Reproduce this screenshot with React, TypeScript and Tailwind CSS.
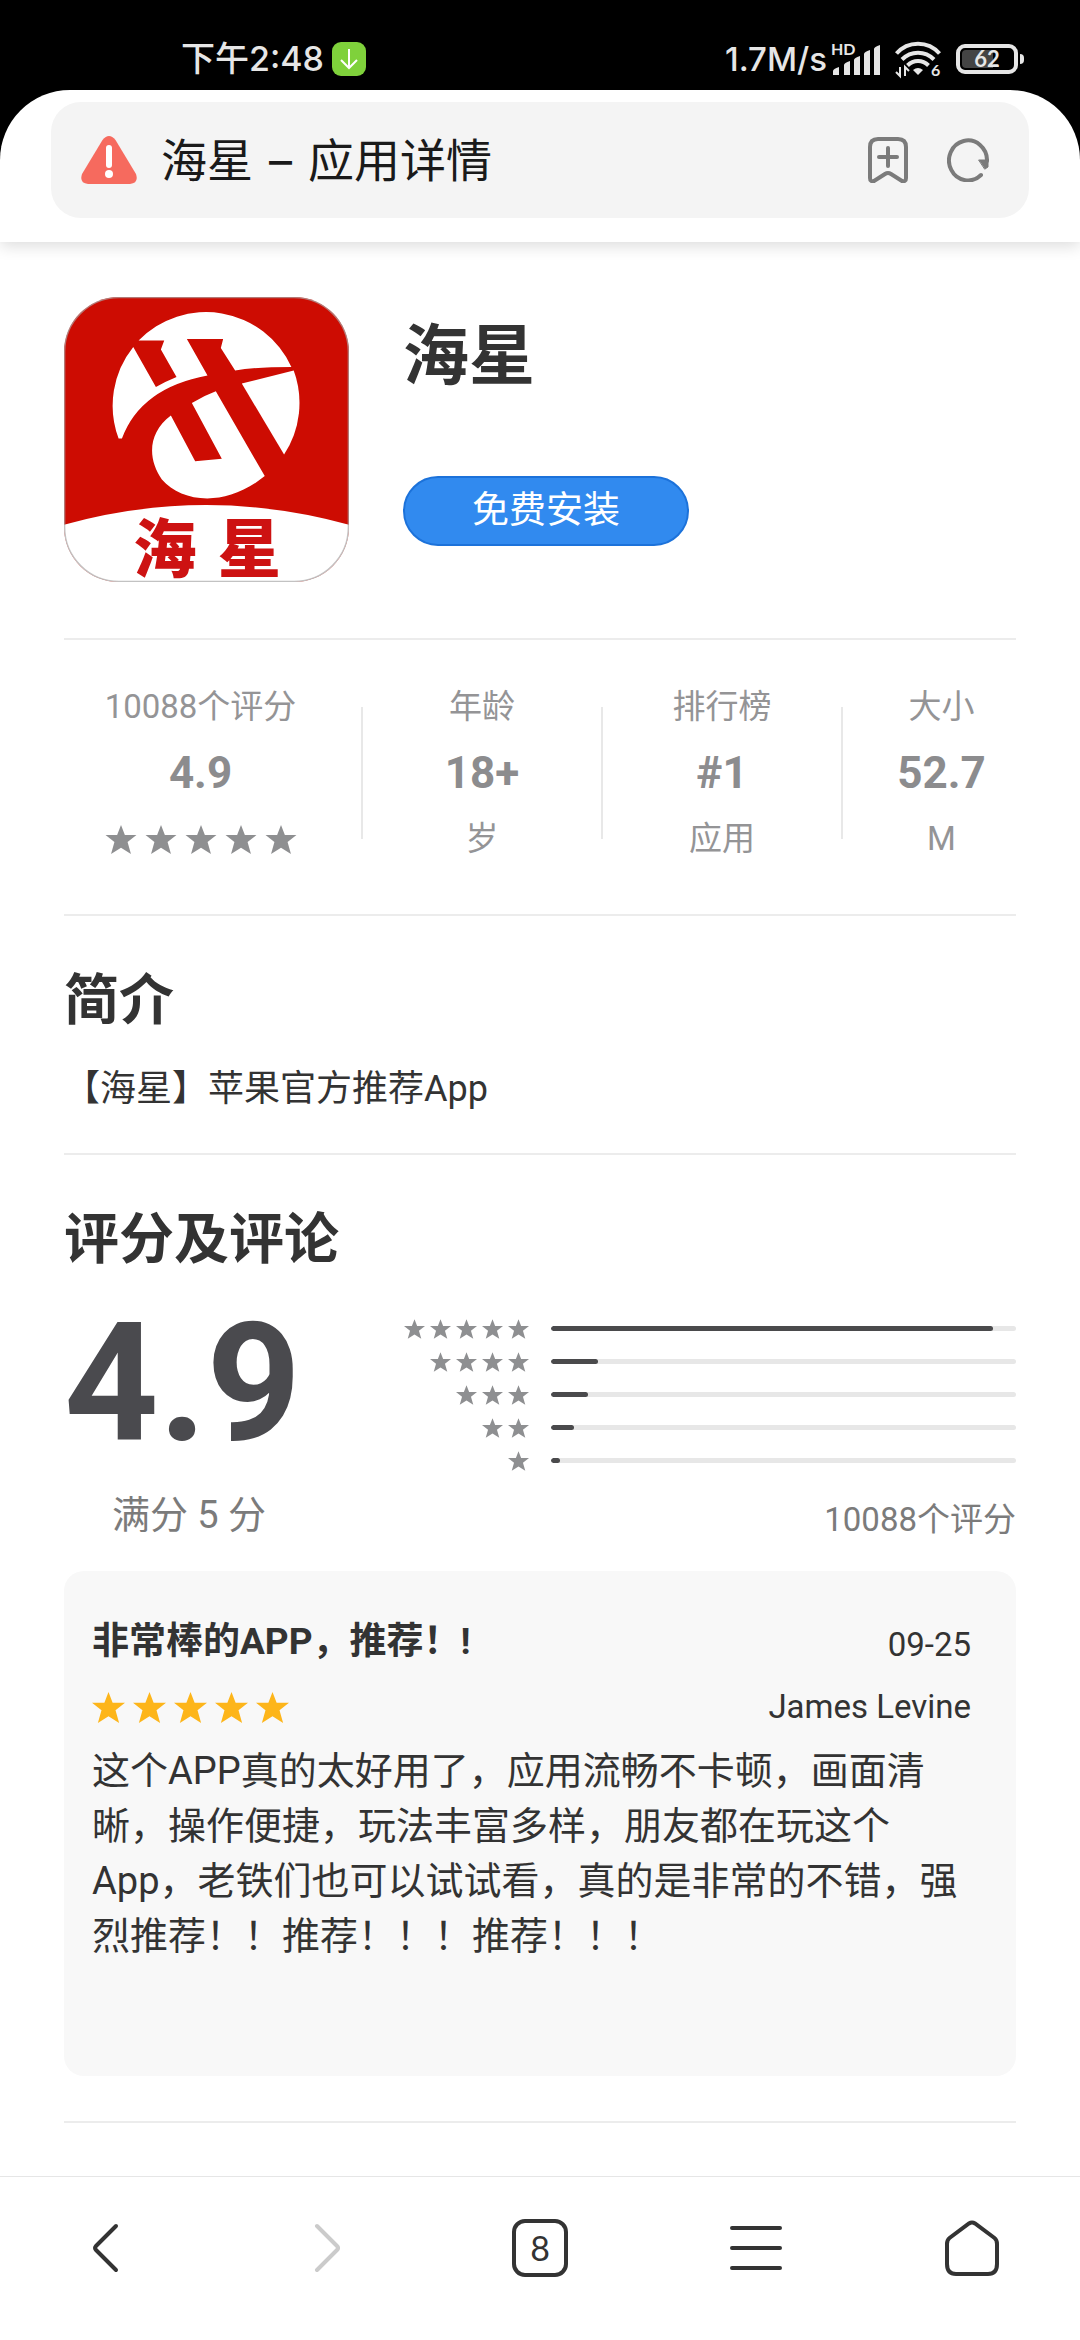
const stats = [
  { label: '年龄', value: '18+', note: '岁' },
  { label: '排行榜', value: '#1', note: '应用' },
]

const breakdown = [
  { stars: 5, percent: 95 },
  { stars: 4, percent: 10 },
  { stars: 3, percent: 8 },
  { stars: 2, percent: 5 },
  { stars: 1, percent: 2 },
]

function Star({ className }: { className: string }) {
  return (
    <svg viewBox="0 0 32 30" className={className} fill="currentColor" aria-hidden="true">
      <path d="M16 0l4 10.400H32l-9.200 7.300L26.300 30 16 23.500 5.700 30l3.500-12.300L0 10.400h12z" />
    </svg>
  )
}

function Stars({ count, className, size }: { count: number; className: string; size: string }) {
  return (
    <div className={`flex items-center ${className}`} role="img" aria-label={`${count} 星`}>
      {Array.from({ length: count }, (_, i) => (
        <Star key={i} className={size} />
      ))}
    </div>
  )
}

function StatusBar() {
  return (
    <div className="flex h-[90px] items-center justify-between pt-7 pr-[56px] pl-[181px] text-[#e6e6e6]">
      <div className="flex items-center gap-2">
        <span className="font-['Inter','Noto_Sans_CJK_SC',sans-serif] text-[34px] leading-10 font-medium">
          下午2:48
        </span>
        <svg viewBox="0 0 34 34" className="size-[34px]" fill="none">
          <rect width="34" height="34" rx="9" fill="#7fd13b" />
          <path d="M17 7v19M9 18l8 8 8-8" stroke="#fff" strokeWidth="2" />
        </svg>
      </div>

      <div className="flex items-center">
        <span className="font-['Inter',sans-serif] text-[33px] leading-10 font-medium">1.7M/s</span>
        <svg viewBox="0 0 50 34" className="ml-1 h-[34px] w-[50px] overflow-visible" fill="currentColor">
          <text x="0" y="13" fontSize="16" fontWeight="700" fontFamily="Lato, sans-serif">
            HD
          </text>
          <path d="M2 33v-4q0-2 6-4v8zM13 33V23q0-2 6-4v14zM23 33V18q0-2 6-4v19zM33 33V12q0-2 6-4v25zM43 33V7q0-2 6-4v30z" />
        </svg>
        <svg
          viewBox="0 0 46 36"
          className="ml-3.5 h-9 w-[46px] overflow-visible"
          fill="none"
          stroke="currentColor"
          strokeWidth="4"
        >
          <path d="M1.500 12.500C13-.5 33-.5 44.500 12.500M7 18.500c9-9 23-9 32 0M12.500 24.500c6-6 15-6 21 0" />
          <path d="M18 29q5-4 10 0l-5 5z" fill="currentColor" stroke="none" />
          <path d="M5 26v9l-4-4M10 35v-9l4 4" strokeWidth="2" />
          <text x="36" y="35" fontSize="16" fontWeight="700" fill="currentColor" stroke="none" fontFamily="Lato, sans-serif">
            6
          </text>
        </svg>
        <div className="ml-[15px] flex items-center gap-0.5">
          <div className="flex h-[30px] w-[62px] rounded-[9px] border-4 border-current p-0.5">
            <div className="flex w-full items-center justify-center rounded-sm bg-linear-to-r from-[#444] from-62% to-transparent to-62% font-['Lato',sans-serif] text-[22px] leading-5 font-bold">
              62
            </div>
          </div>
          <span className="h-2.5 w-1 rounded-r-sm bg-current" />
        </div>
      </div>
    </div>
  )
}

function AddressBar() {
  return (
    <header className="relative z-10 rounded-t-[70px] bg-white px-[51px] pt-3 pb-6 shadow-[0_4px_16px_rgba(0,0,0,0.14)]">
      <div className="flex h-[116px] items-center rounded-[30px] bg-[#f4f4f4] pr-10 pl-[30px]">
        <svg viewBox="0 0 56 48" className="h-12 w-14" fill="none">
          <path d="M21.500 4Q28-4 34.500 4L55 38q3 9-6 10H7q-9-1-6-10z" fill="#f66a5e" />
          <path d="M28 12v17" stroke="#fff" strokeWidth="6" strokeLinecap="round" />
          <circle cx="28" cy="38" r="4" fill="#fff" />
        </svg>
        <div className="ml-6 flex-1 font-['Inter','Noto_Sans_CJK_SC',sans-serif] text-[46px] leading-[60px] text-[#1a1a1a]">
          海星 <span className="mx-[3px]">–</span> 应用详情
        </div>
        <button type="button" aria-label="收藏" className="text-[#7b7b7b]">
          <svg
            viewBox="0 0 40 46"
            className="h-[46px] w-10"
            fill="none"
            stroke="currentColor"
            strokeWidth="4"
            strokeLinecap="round"
            strokeLinejoin="round"
          >
            <path d="M2 10q0-8 8-8h20q8 0 8 8v31q0 4-4 3l-11-7q-3-2-6 0L6 44q-4 1-4-3z" />
            <path d="M20 11v18M11 20h18" />
          </svg>
        </button>
        <button type="button" aria-label="刷新" className="ml-[39px] text-[#7b7b7b]">
          <svg
            viewBox="0 0 42 44"
            className="h-11 w-[42px]"
            fill="none"
            stroke="currentColor"
            strokeWidth="4"
            strokeLinecap="round"
          >
            <path d="M34 37a19 20 0 1 1 6-14" />
            <path d="M32 22h9v7l-3 2z" fill="currentColor" strokeWidth="1" />
          </svg>
        </button>
      </div>
    </header>
  )
}

function AppLogo() {
  return (
    <svg viewBox="0 0 856 856" className="size-[285px] shrink-0 overflow-visible" role="img" aria-label="海星">
      <clipPath id="logo-shape">
        <rect width="856" height="856" rx="165" />
      </clipPath>
      <g clipPath="url(#logo-shape)">
        <rect width="856" height="856" fill="#cd0c02" />
        <g fill="#fff" transform="translate(-74 -82)">
          <path d="M298 213A282 282 0 0 1 757 292Q650 292 588 303L545 235L552 208H443L505 318Q305 355 248 507H238A282 282 0 0 1 282 232L350 352Q380 335 412 322L365 240L375 213Z" />
          <path d="M764 303L608 342L735 555A282 282 0 0 0 764 303Z" />
          <path d="M395 438L468 575L548 568L458 400Q495 378 530 365L677 620C560 715 430 700 368 630C325 570 325 490 395 438Z" />
          <path d="M74 766Q500 648 930 766V938H74Z" />
        </g>
      </g>
      <rect x="2" y="2" width="852" height="852" rx="163" fill="none" stroke="#a8a8a8" strokeOpacity="0.7" strokeWidth="4" />
      <g fill="#cd1212" fontSize="190" fontWeight="900" textAnchor="middle" fontFamily="Noto Sans CJK SC, sans-serif">
        <text x="303" y="826">海</text>
        <text x="557" y="826">星</text>
      </g>
    </svg>
  )
}

function Divider() {
  return <span className="h-[132px] w-0.5 bg-[#e8e8e8]" />
}

function StatsRow() {
  return (
    <section className="flex items-center border-t-2 border-[#ececec] pt-[45px] pb-[53px] text-center text-[33px] leading-[44px] text-[#949496]">
      <div className="flex w-[297px] flex-col items-center gap-[18px] pr-6">
        <div>10088个评分</div>
        <div className="text-[44px] leading-[52px] font-bold text-[#8c8c8e]">4.9</div>
        <Stars count={5} className="h-11 gap-2 text-[#8e8f91]" size="h-[29px] w-8" />
      </div>
      {stats.map((s) => (
        <div key={s.label} className="flex w-60 items-center">
          <Divider />
          <div className="flex flex-1 flex-col gap-[18px]">
            <div>{s.label}</div>
            <div className="text-[44px] leading-[52px] font-bold text-[#8c8c8e]">{s.value}</div>
            <div>{s.note}</div>
          </div>
        </div>
      ))}
      <div className="flex flex-1 items-center">
        <Divider />
        <div className="flex flex-1 flex-col gap-[18px] pl-6">
          <div>大小</div>
          <div className="text-[44px] leading-[52px] font-bold text-[#8c8c8e]">52.7</div>
          <div>M</div>
        </div>
      </div>
    </section>
  )
}

function Ratings() {
  return (
    <section className="border-t-2 border-[#ececec] pt-12">
      <h2 className="text-[55px] leading-[72px] font-bold">评分及评论</h2>

      <div className="mt-[29px] flex">
        <div className="w-[337px]">
          <div className="text-[165px] leading-[160px] font-bold text-[#4a4a4e]">4.9</div>
          <div className="mt-[27px] w-[250px] text-center text-[38px] leading-[48px] text-[#7b7b7b]">满分 5 分</div>
        </div>
        <div className="flex-1 pt-2">
          {breakdown.map((row) => (
            <div key={row.stars} className="flex h-[33px] items-center gap-[22px]">
              <Stars count={row.stars} className="w-32 justify-end gap-[5px] text-[#8e8f91]" size="h-5 w-[21px]" />
              <div className="h-[5px] flex-1 overflow-hidden rounded-full bg-[#e7e7e7]">
                <div className="h-full rounded-full bg-[#4a4a4c]" style={{ width: `${row.percent}%` }} />
              </div>
            </div>
          ))}
          <div className="mt-[21px] text-right text-[33px] leading-[44px] text-[#7b7b7b]">10088个评分</div>
        </div>
      </div>

      <article className="mt-[29px] rounded-[20px] bg-[#f8f8f8] pt-[46px] pr-[45px] pb-[112px] pl-7">
        <div className="flex items-end justify-between">
          <h3 className="text-[37px] leading-[50px] font-bold">非常棒的APP，推荐！!</h3>
          <time className="text-[33px] leading-[44px]">09-25</time>
        </div>
        <div className="mt-[18px] flex items-center justify-between">
          <Stars count={5} className="gap-2 text-[#fdb51a]" size="h-[31px] w-[33px]" />
          <span className="text-[33px] leading-[44px]">James Levine</span>
        </div>
        <p className="mt-[15px] pr-3 text-[38px] leading-[55px]">
          这个APP真的太好用了，应用流畅不卡顿，画面清晰，操作便捷，玩法丰富多样，朋友都在玩这个App，老铁们也可以试试看，真的是非常的不错，强烈推荐！！推荐！！！推荐！！！
        </p>
      </article>
    </section>
  )
}

function BottomNav() {
  return (
    <nav className="grid h-[164px] grid-cols-5 border-t border-[#e6e6e6] bg-white pb-[22px] text-[#333]">
      <button type="button" aria-label="后退" className="flex items-center justify-center">
        <svg viewBox="0 0 32 50" className="h-[50px] w-8" fill="none" stroke="currentColor" strokeWidth="4" strokeLinecap="round">
          <path d="M24 3L4 23q-2 2 0 4l20 20" />
        </svg>
      </button>
      <button type="button" aria-label="前进" disabled className="flex items-center justify-center text-[#cbcbcb]">
        <svg viewBox="0 0 32 50" className="h-[50px] w-8" fill="none" stroke="currentColor" strokeWidth="4" strokeLinecap="round">
          <path d="M9 3l20 20q2 2 0 4L9 47" />
        </svg>
      </button>
      <button type="button" aria-label="标签页" className="flex items-center justify-center">
        <span className="flex h-[58px] w-14 items-center justify-center rounded-[13px] border-4 border-current font-['Lato',sans-serif] text-[34px] leading-10">
          8
        </span>
      </button>
      <button type="button" aria-label="菜单" className="flex items-center justify-center">
        <svg viewBox="0 0 52 44" className="h-11 w-[52px]" stroke="currentColor" strokeWidth="4" strokeLinecap="round">
          <path d="M2 2h48M2 22h48M2 42h48" />
        </svg>
      </button>
      <button type="button" aria-label="主页" className="flex items-center justify-center">
        <svg viewBox="0 0 54 56" className="h-14 w-[54px]" fill="none" stroke="currentColor" strokeWidth="4">
          <path d="M24 3.500q3-2 6 0L49.500 18q2.500 2 2.500 6v20q0 10-9 10H11q-9 0-9-10V24q0-4 2.500-6z" />
        </svg>
      </button>
    </nav>
  )
}

export default function App() {
  return (
    <div className="flex min-h-screen flex-col bg-white font-['Roboto','Noto_Sans_CJK_SC',sans-serif] text-[#333]" lang="zh-CN">
      <div className="bg-black">
        <StatusBar />
        <AddressBar />
      </div>

      <main className="flex-1 px-16 pb-[52px]">
        <section className="flex gap-[54px] pt-[55px] pb-14">
          <AppLogo />
          <div className="flex flex-1 flex-col items-start justify-between pt-[18px] pb-9">
            <h1 className="text-[66px] leading-[84px] font-bold">海星</h1>
            <button
              type="button"
              className="h-[70px] w-[286px] rounded-full border-2 border-[#1c72da] bg-[#318aef] text-[37px] leading-[48px] text-white"
            >
              免费安装
            </button>
          </div>
        </section>

        <StatsRow />

        <section className="border-t-2 border-[#ececec] pt-12 pb-9">
          <h2 className="text-[55px] leading-[72px] font-bold">简介</h2>
          <p className="mt-[25px] text-[36px] leading-[56px]">【海星】苹果官方推荐App</p>
        </section>

        <Ratings />

        <hr className="mt-[45px] border-t-2 border-[#ececec]" />
      </main>

      <BottomNav />
    </div>
  )
}
